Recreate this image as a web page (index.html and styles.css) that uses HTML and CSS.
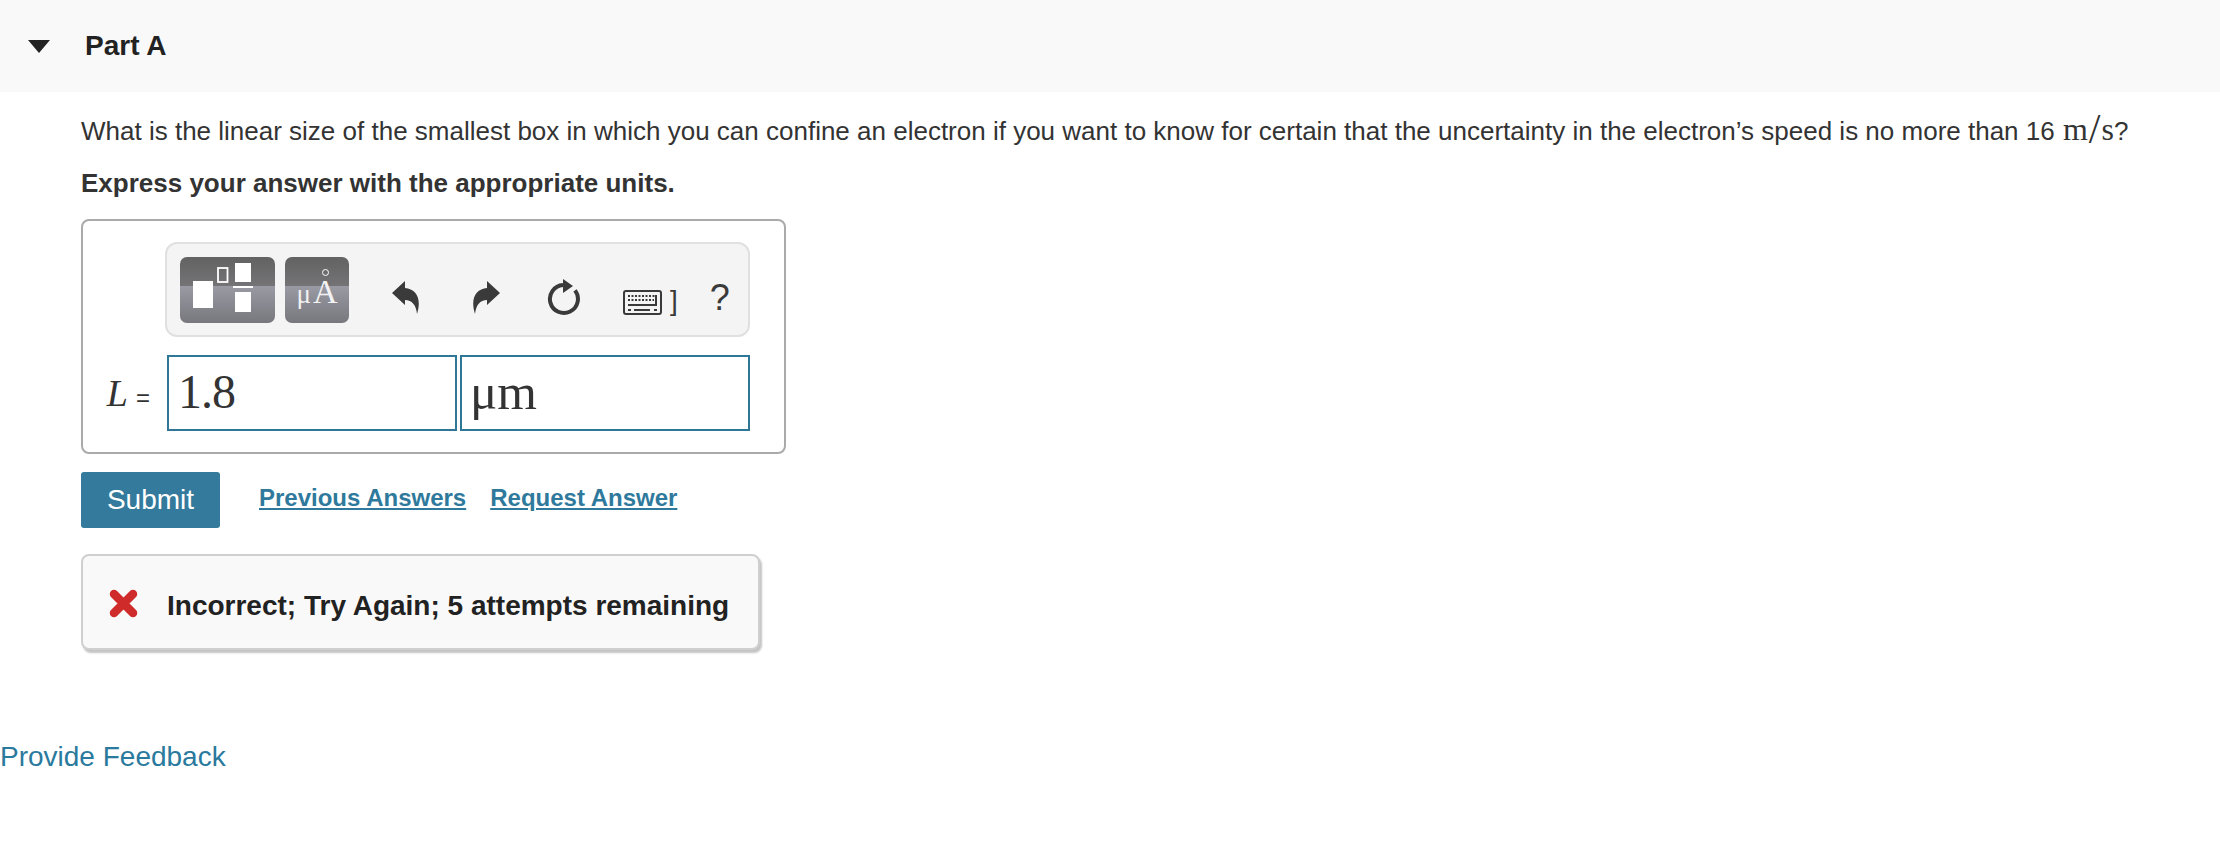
FILE: index.html
```html
<!DOCTYPE html>
<html lang="en">
<head>
<meta charset="utf-8">
<title>Part A</title>
<link rel="stylesheet" href="styles.css">
</head>
<body>
<header class="part-header">
  <svg class="caret" width="22" height="13" viewBox="0 0 22 13"><path d="M0 0H22L11 13Z" fill="#222"/></svg>
  <h2 class="part-title">Part A</h2>
</header>
<main class="content">
  <p class="question">What is the linear size of the smallest box in which you can confine an electron if you want to know for certain that the uncertainty in the electron’s speed is no more than 16 <span class="math">m<span class="slash">/</span>s</span>?</p>
  <p class="instruction">Express your answer with the appropriate units.</p>
  <section class="answer-box">
    <div class="toolbar">
      <div class="tool-btn tool-templates">
        <svg width="95" height="66" viewBox="0 0 95 66">
          <rect x="13" y="24" width="20" height="27" fill="#fff"/>
          <rect x="38" y="11" width="9.5" height="14" fill="none" stroke="#fff" stroke-width="1.8"/>
          <rect x="55" y="6" width="16" height="19" fill="#fff"/>
          <rect x="53" y="29" width="20" height="2" fill="#fff"/>
          <rect x="55" y="35" width="16" height="20" fill="#fff"/>
        </svg>
      </div>
      <div class="tool-btn tool-units"><span class="ring"></span><span class="units-text"><span class="mu">μ</span>A</span></div>
      <svg class="ico ico-undo" width="28" height="33" viewBox="0 0 28 33"><path d="M0 12L13 0V7C24 8 30 17 25 33C24 24 20 19 13 19V24Z" fill="#3a3a3a"/></svg>
      <svg class="ico ico-redo" width="28" height="33" viewBox="0 0 28 33"><path d="M28 12L15 0V7C4 8 -2 17 3 33C4 24 8 19 15 19V24Z" fill="#3a3a3a"/></svg>
      <svg class="ico ico-reset" width="36" height="37" viewBox="0 0 36 37"><path d="M17 6A14 14 0 1 0 29 11.4" fill="none" stroke="#3a3a3a" stroke-width="4"/><path d="M17 0L27 7L17 14Z" fill="#3a3a3a"/></svg>
      <svg class="ico ico-keys" width="39" height="25" viewBox="0 0 39 25"><rect x="1" y="1" width="37" height="23" rx="2" fill="#f4f4f4" stroke="#3a3a3a" stroke-width="2"/><path d="M5 6H33M5 10H31" stroke="#3a3a3a" stroke-width="2" stroke-dasharray="2 1.5"/><path d="M33 5V15H5M5 20H8M11 20H27M31 20H34" fill="none" stroke="#3a3a3a" stroke-width="2"/></svg>
      <span class="bracket">]</span>
      <span class="help">?</span>
    </div>
    <div class="answer-row">
      <span class="answer-label"><i class="var">L</i><span class="eq">=</span></span>
      <div class="field"><span class="value">1.8</span></div>
      <div class="field field-units">μm</div>
    </div>
  </section>
  <div class="actions">
    <button class="submit" type="button">Submit</button>
    <a class="action-link action-first" href="#">Previous Answers</a>
    <a class="action-link" href="#">Request Answer</a>
  </div>
  <div class="feedback">
    <svg class="cross" width="29" height="29" viewBox="0 0 29 29"><path d="M5 5L24 24M24 5L5 24" stroke="#cf2b2b" stroke-width="8.5" stroke-linecap="round"/></svg>
    <span class="feedback-text">Incorrect; Try Again; 5 attempts remaining</span>
  </div>
</main>
<a class="provide" href="#">Provide Feedback</a>
</body>
</html>
```
FILE: styles.css
```css
* { box-sizing: border-box; }
html, body { margin: 0; padding: 0; background: #fff; }
body { font-family: "Liberation Sans", Arial, sans-serif; color: #333; height: 866px; overflow: hidden; }
.part-header { height: 92px; background: #f9f9f9; display: flex; align-items: center; padding-left: 28px; }
.caret { margin-right: 35px; }
.part-title { margin: 0; font-size: 28px; line-height: 1; font-weight: 700; color: #222; }
.content { padding-left: 81px; }
.question { margin: 0; padding-top: 21px; font-size: 26px; line-height: 36px; white-space: nowrap; }
.math { font-family: "Liberation Serif", serif; font-size: 32px; line-height: 0; margin-left: 1px; }
.slash { font-size: 42px; font-weight: 400; line-height: 0; vertical-align: -3px; margin: 0 1px; }
.instruction { margin: 16px 0 0; font-size: 26px; line-height: 36px; font-weight: 700; }
.answer-box { width: 705px; height: 235px; margin-top: 18px; border: 2px solid #aaa; border-radius: 8px; padding: 21px 0 0 82px; }
.toolbar { width: 585px; height: 95px; background: #f4f4f4; border: 2px solid #e0e0e0; border-radius: 12px; display: flex; align-items: flex-start; padding: 13px 0 0 13px; }
.tool-btn { height: 66px; border-radius: 7px; background: linear-gradient(#626262 0, #747477 44%, #9a9aa4 44%, #77777d 100%); position: relative; overflow: hidden; }
.tool-templates { width: 95px; }
.tool-templates svg { display: block; }
.tool-units { width: 64px; margin-left: 10px; text-align: center; }
.units-text { font-family: "Liberation Serif", serif; font-size: 34px; line-height: 36px; display: block; margin-top: 17px; color: #f2f2f2; }
.mu { font-size: 27px; margin-right: 2px; }
.ring { position: absolute; left: 37px; top: 12px; width: 7px; height: 7px; border: 1.5px solid #fff; border-radius: 50%; }
.ico { flex: none; }
.ico-undo { margin: 24px 0 0 43px; }
.ico-redo { margin: 24px 0 0 52px; }
.ico-reset { margin: 22px 0 0 46px; }
.ico-keys { margin: 33px 0 0 41px; }
.bracket { margin: 28px 0 0 8px; font-size: 28px; line-height: 32px; color: #3a3a3a; }
.help { margin: 20px 0 0 32px; font-size: 36px; line-height: 42px; color: #3a3a3a; }
.answer-row { display: flex; align-items: center; margin-top: 18px; margin-left: -82px; }
.answer-label { width: 84px; text-align: right; padding-right: 17px; font-family: "Liberation Serif", serif; color: #333; white-space: nowrap; }
.var { font-size: 38px; margin-right: 8px; }
.eq { font-family: "Liberation Sans", sans-serif; font-size: 24px; }
.field { width: 290px; height: 76px; border: 2px solid #2f7797; background: #fff; font-family: "Liberation Serif", serif; font-size: 48px; line-height: 70px; padding-left: 9px; color: #333; }
.value { letter-spacing: -1px; }
.field-units { margin-left: 3px; font-size: 51px; padding-left: 8px; }
.actions { display: flex; align-items: flex-start; margin-top: 18px; }
.submit { width: 139px; height: 56px; background: #337a9c; color: #fff; border: 0; border-radius: 3px; font: 400 28px "Liberation Sans", sans-serif; padding: 0; }
.action-link { margin-top: 12px; font-size: 24px; line-height: 28px; font-weight: 700; color: #2f7a9c; text-decoration: underline; }
.action-first { margin-left: 39px; margin-right: 24px; }
.feedback { width: 679px; height: 96px; margin-top: 26px; background: #f9f9f9; border: 2px solid #cfcfcf; border-radius: 8px; box-shadow: 2px 3px 2px #c4c4c4; display: flex; align-items: center; padding: 2px 0 0 26px; font-size: 28px; font-weight: 700; color: #222; white-space: nowrap; }
.feedback-text { margin-top: 6px; }
.cross { margin-right: 29px; flex: none; }
.provide { display: block; margin-top: 89px; font-size: 28px; line-height: 36px; color: #2a7a9e; text-decoration: none; }
```
